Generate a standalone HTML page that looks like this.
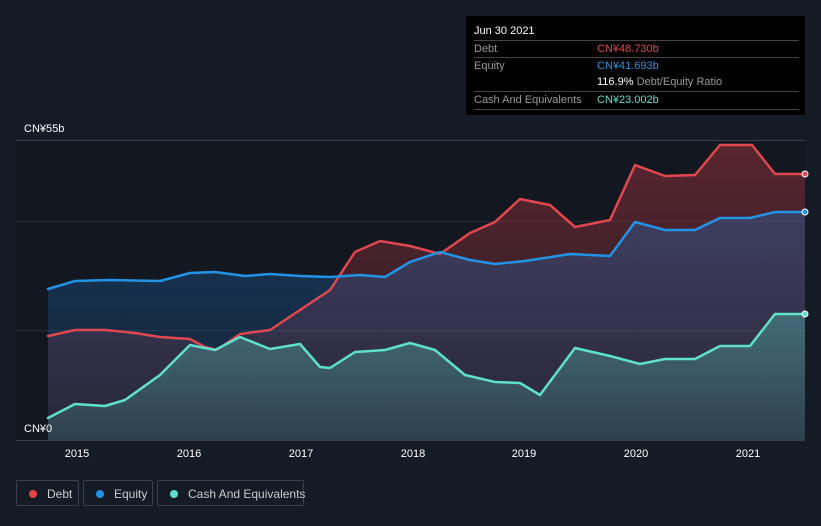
<!DOCTYPE html>
<html><head><meta charset="utf-8"><style>
body{margin:0;width:821px;height:526px;background:#151b25;font-family:"Liberation Sans",sans-serif;overflow:hidden;position:relative}
.tt{position:absolute;left:466px;top:16px;width:339px;height:99px;background:#000;color:#fff;font-size:11px}
.row{position:absolute;left:8px;width:325px;border-top:1px solid #444;height:17px}
.lbl{position:absolute;left:0;top:2px;color:#999}
.val{position:absolute;left:123px;top:2px}
.leg{position:absolute;top:480px;height:26px;border:1px solid #3a414c;border-radius:2px;color:#ccc;font-size:12px;line-height:26px;box-sizing:border-box;white-space:nowrap}
.leg i{display:inline-block;width:8px;height:8px;border-radius:50%;margin:0 10px 0 12px;vertical-align:-0px}
</style></head><body>
<svg width="821" height="526" style="position:absolute;left:0;top:0">
<defs>
<linearGradient id="gd" x1="0" y1="0" x2="0" y2="1"><stop offset="0" stop-color="#c83c46" stop-opacity=".38"/><stop offset="1" stop-color="#c83c46" stop-opacity=".12"/></linearGradient>
<linearGradient id="ge" x1="0" y1="0" x2="0" y2="1"><stop offset="0" stop-color="#1f6fc0" stop-opacity=".35"/><stop offset="1" stop-color="#1f6fc0" stop-opacity=".12"/></linearGradient>
<linearGradient id="gc" x1="0" y1="0" x2="0" y2="1"><stop offset="0" stop-color="#5ad2c3" stop-opacity=".35"/><stop offset="1" stop-color="#5ad2c3" stop-opacity=".15"/></linearGradient>
</defs>
<rect x="16" y="140" width="789" height="300" fill="#121720"/>
<line x1="16" y1="140.5" x2="805" y2="140.5" stroke="#3a3f48"/>
<line x1="16" y1="221.5" x2="805" y2="221.5" stroke="#262b34"/>
<line x1="16" y1="330.5" x2="805" y2="330.5" stroke="#262b34"/>
<line x1="16" y1="440.5" x2="805" y2="440.5" stroke="#3a3f48"/>
<g stroke-linejoin="round" stroke-linecap="round">
<polygon fill="url(#gd)" points="48,440 48,336 75,330 105,330 135,333 160,337 190,339 205,347 217,350 240,334 270,330 300,310 330,290 355,252 380,241 410,246 440,254 470,233 495,222 520,199 550,205 575,227 610,220 635,165 665,176 695,175 720,145 752,145 775,174 805,174 805,440"/>
<polygon fill="url(#ge)" points="48,440 48,289 75,281 110,280 160,281 190,273 215,272 245,276 270,274 300,276 330,277 360,275 385,277 410,262 440,252 470,260 495,264 525,261 570,254 610,256 635,222 665,230 695,230 720,218 750,218 775,212 805,212 805,440"/>
<polygon fill="url(#gc)" points="48,440 48,418 75,404 105,406 125,400 160,375 190,345 215,350 240,337 270,349 300,344 320,367 330,368 355,352 385,350 410,343 435,350 465,375 495,382 520,383 540,395 575,348 610,356 640,364 665,359 695,359 720,346 750,346 775,314 805,314 805,440"/>
<polyline fill="none" stroke="#e0474f" stroke-width="2.5" points="48,336 75,330 105,330 135,333 160,337 190,339 205,347 217,350 240,334 270,330 300,310 330,290 355,252 380,241 410,246 440,254 470,233 495,222 520,199 550,205 575,227 610,220 635,165 665,176 695,175 720,145 752,145 775,174 805,174"/>
<polyline fill="none" stroke="#2394e5" stroke-width="2.5" points="48,289 75,281 110,280 160,281 190,273 215,272 245,276 270,274 300,276 330,277 360,275 385,277 410,262 440,252 470,260 495,264 525,261 570,254 610,256 635,222 665,230 695,230 720,218 750,218 775,212 805,212"/>
<polyline fill="none" stroke="#5fe0cc" stroke-width="2.5" points="48,418 75,404 105,406 125,400 160,375 190,345 215,350 240,337 270,349 300,344 320,367 330,368 355,352 385,350 410,343 435,350 465,375 495,382 520,383 540,395 575,348 610,356 640,364 665,359 695,359 720,346 750,346 775,314 805,314"/>
</g>
<circle cx="805" cy="174" r="3" fill="#e0474f" stroke="#fff"/>
<circle cx="805" cy="212" r="3" fill="#2394e5" stroke="#fff"/>
<circle cx="805" cy="314" r="3" fill="#5fe0cc" stroke="#fff"/>
<g fill="#fff" font-size="11" font-family="Liberation Sans,sans-serif">
<text x="24" y="132">CN¥55b</text><text x="24" y="432">CN¥0</text>
<g text-anchor="middle"><text x="77" y="457">2015</text><text x="189" y="457">2016</text><text x="301" y="457">2017</text><text x="413" y="457">2018</text><text x="524" y="457">2019</text><text x="636" y="457">2020</text><text x="748" y="457">2021</text></g>
</g>
</svg>
<div class="tt">
<div style="position:absolute;left:8px;top:9px">Jun 30 2021</div>
<div class="row" style="top:24px"><span class="lbl">Debt</span><span class="val" style="color:#e8434b">CN¥48.730b</span></div>
<div class="row" style="top:41px"><span class="lbl">Equity</span><span class="val" style="color:#2394e5">CN¥41.693b</span></div>
<div class="row" style="top:58px;border-top:none"><span class="val"><b style="font-weight:normal">116.9%</b> <span style="color:#999">Debt/Equity Ratio</span></span></div>
<div class="row" style="top:75px;border-bottom:1px solid #444"><span class="lbl">Cash And Equivalents</span><span class="val" style="color:#5fe0cc">CN¥23.002b</span></div>
</div>
<div class="leg" style="left:16px;width:63px"><i style="background:#e8434b"></i>Debt</div>
<div class="leg" style="left:83px;width:70px"><i style="background:#2394e5"></i>Equity</div>
<div class="leg" style="left:157px;width:147px"><i style="background:#5fe0cc"></i>Cash And Equivalents</div>
</body></html>
